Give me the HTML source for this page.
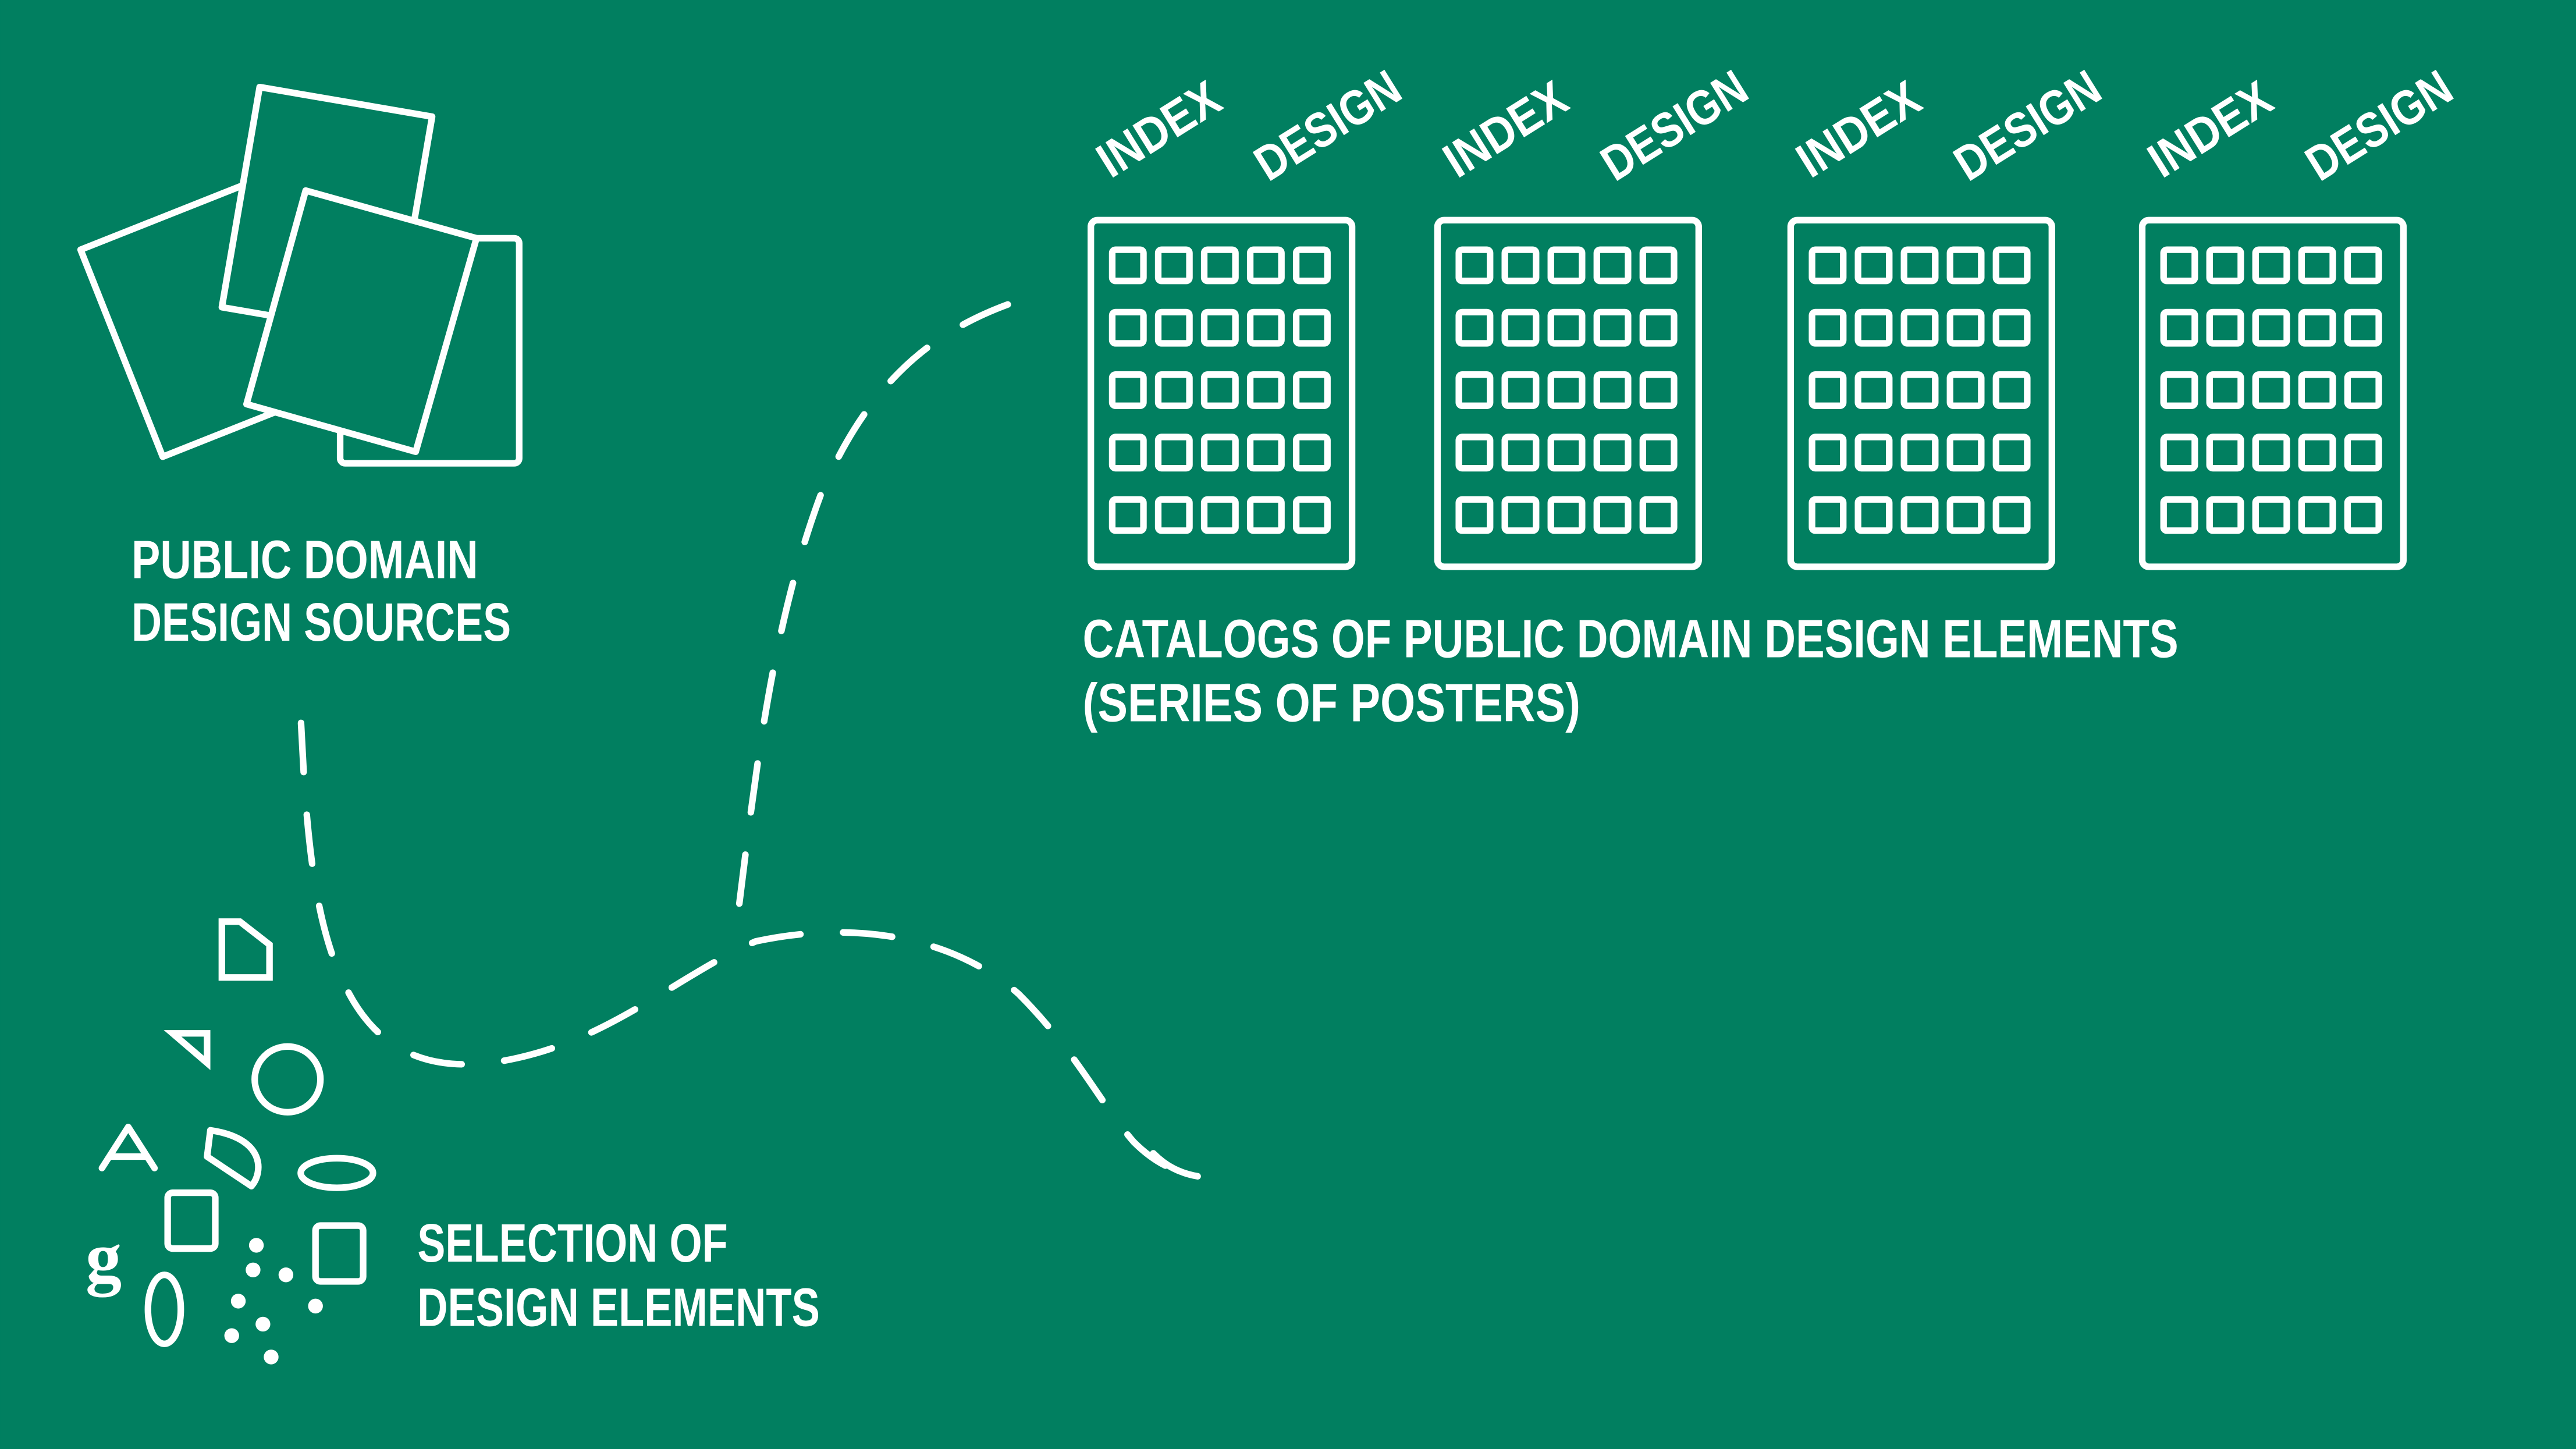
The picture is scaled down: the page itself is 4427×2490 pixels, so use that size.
<!DOCTYPE html>
<html><head><meta charset="utf-8"><style>
html,body{margin:0;padding:0;background:#017f60;overflow:hidden}
svg{display:block}
text{font-family:"Liberation Sans Narrow","Liberation Sans",sans-serif;font-weight:bold;fill:#fff}
</style></head><body>
<svg width="4427" height="2490" viewBox="0 0 1568 882" xmlns="http://www.w3.org/2000/svg">
<rect width="1568" height="882" fill="#017f60"/>
<defs>
<g id="poster">
<rect x="0" y="0" width="159" height="211" rx="4" fill="none" stroke="#fff" stroke-width="4"/>
<g fill="none" stroke="#fff" stroke-width="4">
<g id="row">
<rect x="13" y="18" width="19" height="19" rx="2"/>
<rect x="41" y="18" width="19" height="19" rx="2"/>
<rect x="69" y="18" width="19" height="19" rx="2"/>
<rect x="97" y="18" width="19" height="19" rx="2"/>
<rect x="125" y="18" width="19" height="19" rx="2"/>
</g>
<use href="#row" y="38"/><use href="#row" y="76"/><use href="#row" y="114"/><use href="#row" y="152"/>
</g>
<text x="12" y="-25" font-size="30" transform="rotate(-32 12 -25)" textLength="82" lengthAdjust="spacingAndGlyphs">INDEX</text>
<text x="108" y="-23" font-size="30" transform="rotate(-32 108 -23)" textLength="98" lengthAdjust="spacingAndGlyphs">DESIGN</text>
</g>
</defs>
<use href="#poster" x="664" y="134"/>
<use href="#poster" x="875" y="134"/>
<use href="#poster" x="1090" y="134"/>
<use href="#poster" x="1304" y="134"/>

<g fill="#017f60" stroke="#fff" stroke-width="4" stroke-linejoin="round">
<polygon points="49,152 175,102 225,228 99,278"/>
<polygon points="158,53 263,71 240,205 135,187"/>
<rect x="207" y="145" width="109" height="137" rx="3"/>
<polygon points="186,116 290,145 253,275 150,246"/>
</g>

<text x="80" y="352" font-size="33" textLength="211" lengthAdjust="spacingAndGlyphs">PUBLIC DOMAIN</text>
<text x="80" y="390" font-size="33" textLength="231" lengthAdjust="spacingAndGlyphs">DESIGN SOURCES</text>
<text x="659" y="400" font-size="33" textLength="667" lengthAdjust="spacingAndGlyphs">CATALOGS OF PUBLIC DOMAIN DESIGN ELEMENTS</text>
<text x="659" y="439" font-size="33" textLength="303" lengthAdjust="spacingAndGlyphs">(SERIES OF POSTERS)</text>
<text x="254" y="768" font-size="33" textLength="189" lengthAdjust="spacingAndGlyphs">SELECTION OF</text>
<text x="254" y="807" font-size="33" textLength="245" lengthAdjust="spacingAndGlyphs">DESIGN ELEMENTS</text>

<g fill="none" stroke="#fff" stroke-width="4" stroke-linecap="round">
<path stroke-dasharray="30 26" d="M183,436 C186,500 190,560 210,600 C235,652 280,655 330,640 C380,625 420,590 460,573 C520,560 580,570 620,605 C655,640 670,672 690,695 C705,710 718,714 730,716" stroke-dashoffset="-4"/>
<path stroke-dasharray="30 26" d="M450,550 C460,470 470,380 500,300 C530,230 570,200 620,183"/>
<path d="M702,702 C710,710 718,714 729,716"/>
</g>

<g fill="none" stroke="#fff" stroke-width="4" stroke-linejoin="miter">
<polygon points="135,561 146,561 164,575 164,595 135,595"/>
<polygon points="105,629 126,629 126,647"/>
<circle cx="175" cy="657" r="20"/>
<path d="M62,711 L78,686 L94,711 M67,704 L89,704" stroke-linecap="round" stroke-linejoin="round"/>
<path d="M128,688 L126,704 L153,722 C160,714 162,693 128,688 Z" stroke-linejoin="round"/>
<ellipse cx="205" cy="714" rx="22" ry="9"/>
<rect x="102" y="726" width="29" height="34" rx="3"/>
<rect x="192" y="746" width="29" height="34" rx="3"/>
<ellipse cx="100" cy="797" rx="10" ry="21"/>
</g>
<text x="52" y="780" font-size="44" style="font-family:'Liberation Serif',serif;font-weight:bold">g</text>
<g fill="#fff">
<circle cx="156" cy="758" r="4.5"/><circle cx="154" cy="773" r="4.5"/><circle cx="174" cy="776" r="4.5"/>
<circle cx="145" cy="792" r="4.5"/><circle cx="192" cy="795" r="4.5"/><circle cx="160" cy="806" r="4.5"/>
<circle cx="141" cy="813" r="4.5"/><circle cx="165" cy="826" r="4.5"/>
</g>
</svg>
</body></html>
